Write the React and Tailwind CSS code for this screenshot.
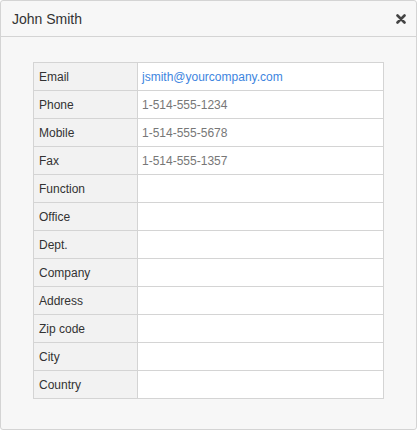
import React from 'react';

const rows = [
    { label: 'Email', value: 'jsmith@yourcompany.com', link: true },
    { label: 'Phone', value: '1-514-555-1234' },
    { label: 'Mobile', value: '1-514-555-5678' },
    { label: 'Fax', value: '1-514-555-1357' },
    { label: 'Function', value: '' },
    { label: 'Office', value: '' },
    { label: 'Dept.', value: '' },
    { label: 'Company', value: '' },
    { label: 'Address', value: '' },
    { label: 'Zip code', value: '' },
    { label: 'City', value: '' },
    { label: 'Country', value: '' },
];

const App = () => {
    return (
        <div className="w-[417px] h-[430px] bg-white font-['Liberation_Sans',Arial,sans-serif]">
            <div className="w-full h-full bg-[#f7f7f7] border border-[#d4d4d4] rounded-[3px] flex flex-col">
                {/* Header */}
                <div className="h-[36px] border-b border-[#d4d4d4] flex items-center justify-between pl-[11px] pr-[10px]">
                    <span className="text-[14px] text-[#333] leading-none">John Smith</span>
                    <svg width="10" height="10" viewBox="0 0 10 10" className="mt-[1px]">
                        <path d="M1.5 1.5 L8.5 8.5 M8.5 1.5 L1.5 8.5" stroke="#444" strokeWidth="2.6" strokeLinecap="round" />
                    </svg>
                </div>

                {/* Body */}
                <div className="pt-[25px] px-[32px]">
                    <table className="w-[351px] border-collapse text-[12px] leading-none">
                        <tbody>
                            {rows.map(r => (
                                <tr key={r.label} className="h-[28px]">
                                    <td className="w-[104px] bg-[#f2f2f2] border border-[#d4d4d4] pl-[5px] text-[#333]">{r.label}</td>
                                    <td className="bg-white border border-[#d4d4d4] pl-[4px] text-[#777]">
                                        {r.link ? <span className="text-[#3d85e0]">{r.value}</span> : r.value}
                                    </td>
                                </tr>
                            ))}
                        </tbody>
                    </table>
                </div>
            </div>
        </div>
    );
};

export default App;
